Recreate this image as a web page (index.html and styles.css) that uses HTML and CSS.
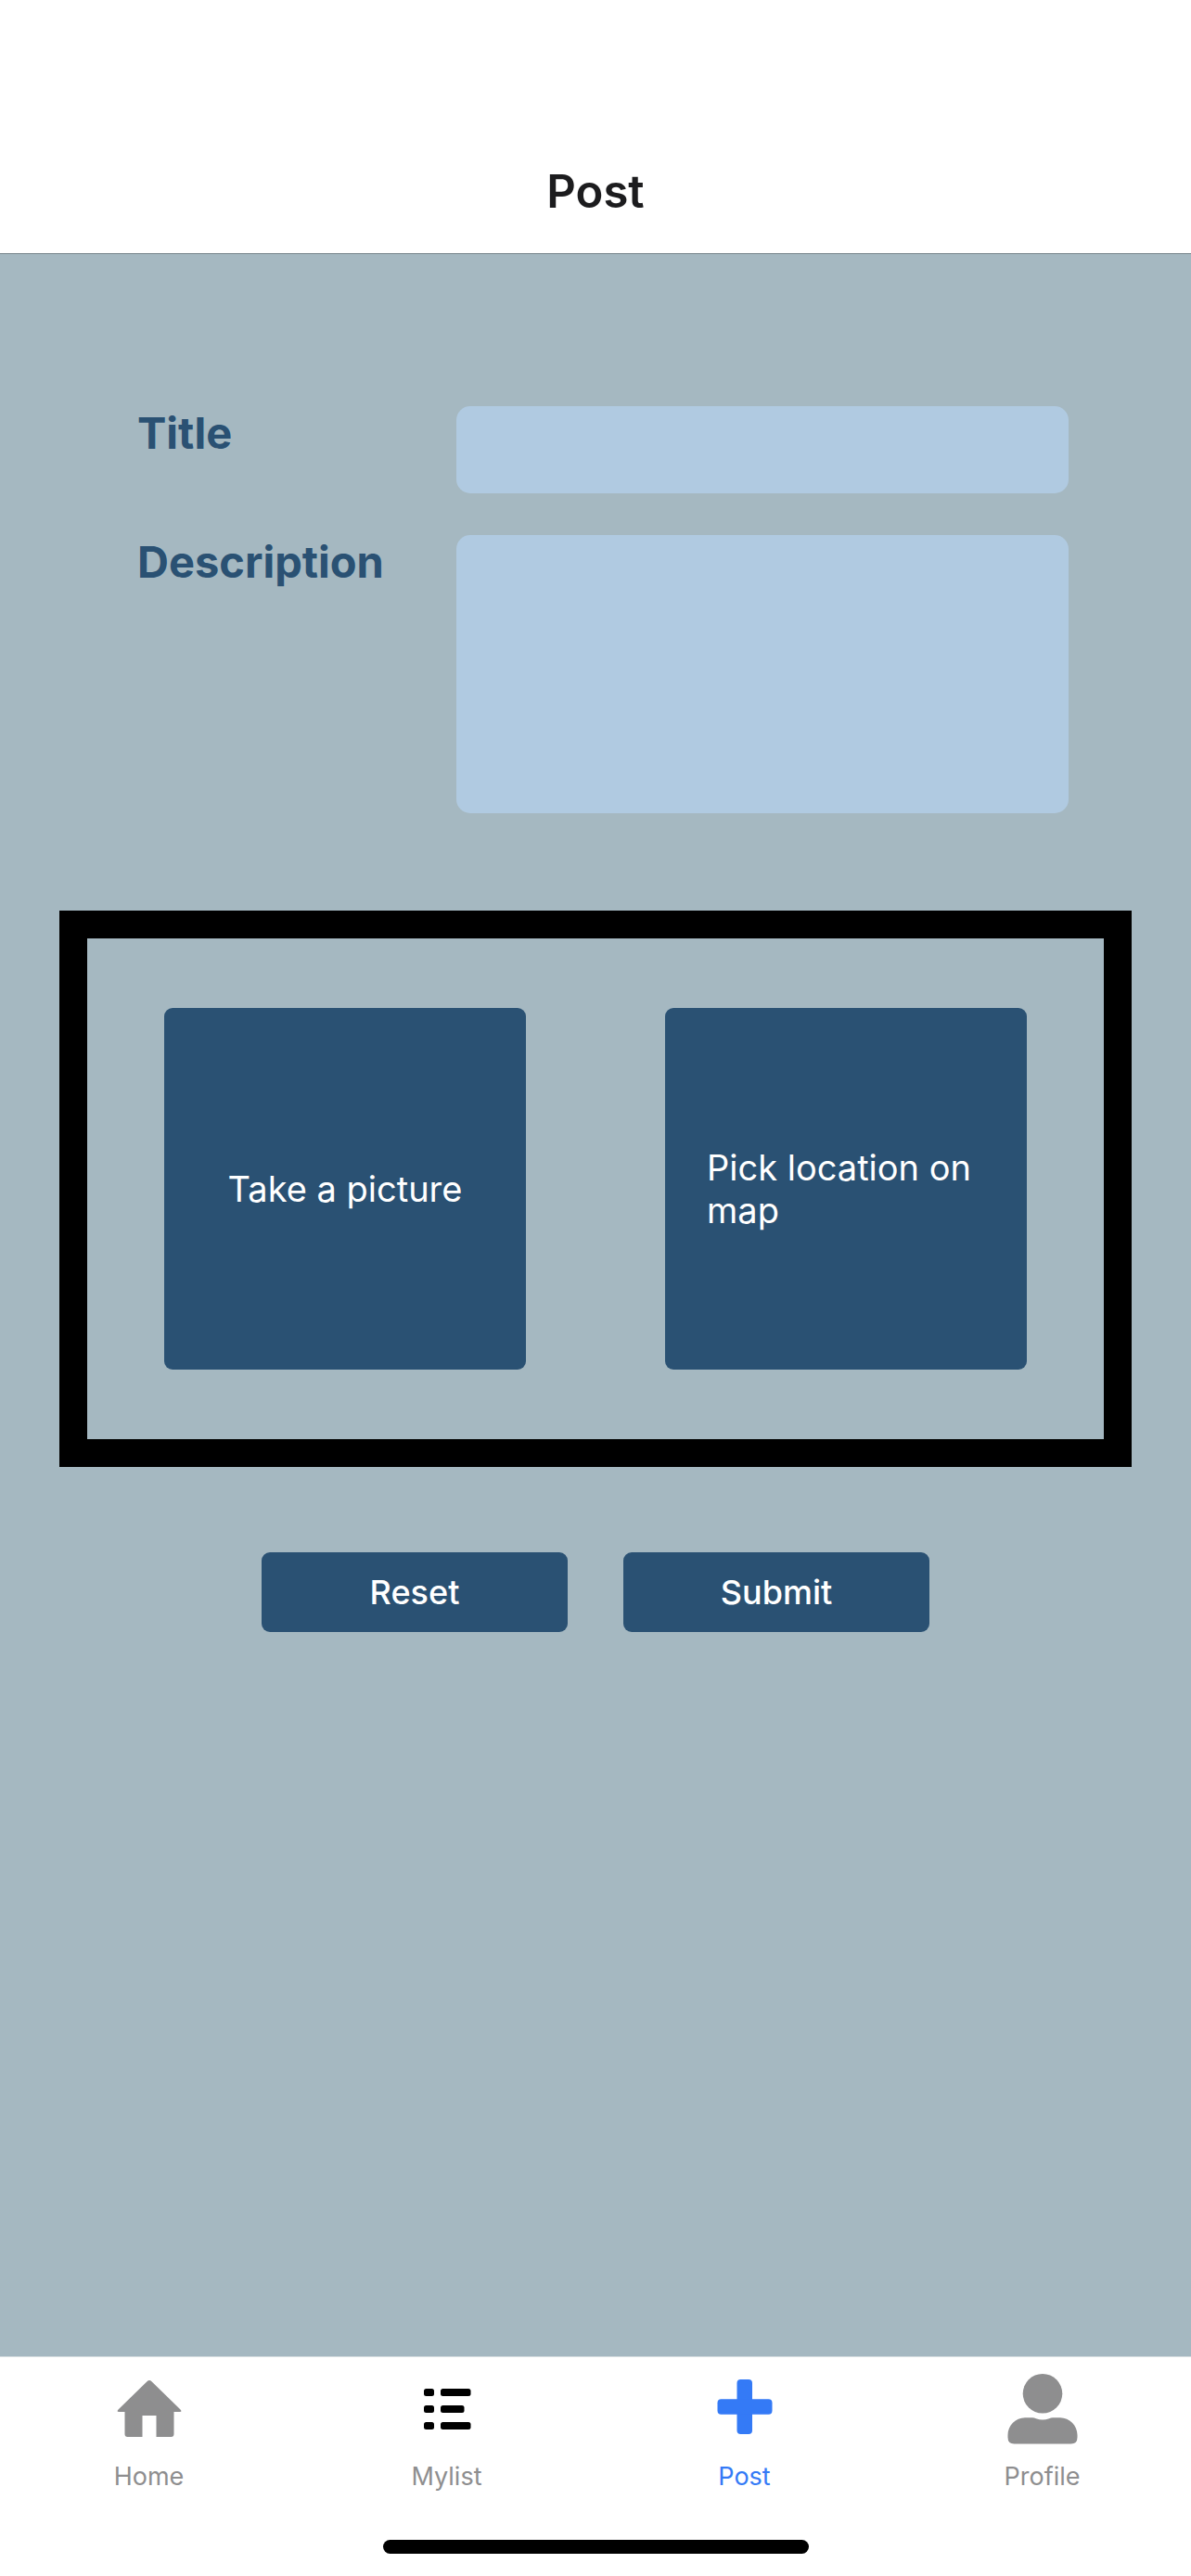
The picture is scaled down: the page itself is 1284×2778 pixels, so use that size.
FILE: index.html
```html
<!DOCTYPE html>
<html lang="en">
<head>
<meta charset="utf-8">
<meta name="viewport" content="width=device-width, initial-scale=1">
<title>Post</title>
<link rel="stylesheet" href="styles.css">
</head>
<body>
<div class="app">
  <header class="header">
    <h1 class="header-title">Post</h1>
  </header>

  <main class="main">
    <form class="form">
      <div class="fields">
        <label class="field-label" for="title">Title</label>
        <input class="field" id="title" type="text">
        <label class="field-label" for="description">Description</label>
        <textarea class="field field-tall" id="description"></textarea>
      </div>

      <div class="media">
        <button class="tile" type="button">Take a picture</button>
        <button class="tile" type="button">Pick location on map</button>
      </div>

      <div class="actions">
        <button class="action" type="reset">Reset</button>
        <button class="action" type="submit">Submit</button>
      </div>
    </form>
  </main>

  <footer class="footer">
    <nav class="tabs">
      <a class="tab" href="#home">
        <svg class="tab-icon" viewBox="0 0 90 90" aria-hidden="true">
          <path d="M42.500 16.200Q45 14 47.500 16.200L78.500 46.500Q80.500 49 78 49H71.500V73Q71.500 76 68.500 76H52.500V53H37.500V76H21.500Q18.500 76 18.500 73V49H12Q9.500 49 11.500 46.500Z"/>
        </svg>
        <span>Home</span>
      </a>
      <a class="tab" href="#mylist">
        <svg class="tab-icon tab-icon-dark" viewBox="0 0 90 90" aria-hidden="true">
          <rect x="20" y="24" width="11" height="8" rx="2.500"/>
          <rect x="38" y="24" width="32.500" height="8" rx="2.500"/>
          <rect x="20" y="42" width="11" height="8" rx="2.500"/>
          <rect x="38" y="42" width="25.500" height="8" rx="2.500"/>
          <rect x="20" y="60" width="11" height="8" rx="2.500"/>
          <rect x="38" y="60" width="32.500" height="8" rx="2.500"/>
        </svg>
        <span>Mylist</span>
      </a>
      <a class="tab tab-active" href="#post" aria-current="page">
        <svg class="tab-icon" viewBox="0 0 90 90" aria-hidden="true">
          <rect x="36.500" y="14" width="16.500" height="59" rx="4"/>
          <rect x="15.500" y="35.300" width="59" height="16.500" rx="4"/>
        </svg>
        <span>Post</span>
      </a>
      <a class="tab" href="#profile">
        <svg class="tab-icon" viewBox="0 0 90 90" aria-hidden="true">
          <circle cx="45" cy="29.300" r="21.300"/>
          <path d="M26 55.200H34Q36 55.200 38 56.200Q45 58.600 52 56.200Q54 55.200 56 55.200H64C74 55.200 82.500 63.500 82.500 74V76.500Q82.500 83.500 75.500 83.500H14.500Q7.500 83.500 7.500 76.500V74C7.500 63.500 16 55.200 26 55.200Z"/>
        </svg>
        <span>Profile</span>
      </a>
    </nav>
    <div class="home-indicator"></div>
  </footer>
</div>
</body>
</html>
```
FILE: styles.css
```css
* {
  box-sizing: border-box;
}

body {
  margin: 0;
  background: #a5b8c1;
  font-family: Inter, "Liberation Sans", sans-serif;
}

button,
input,
textarea {
  font: inherit;
  border: 0;
}

.app {
  display: flex;
  flex-direction: column;
  min-height: 100vh;
}

.header {
  padding: 177px 24px 36px;
  background: #fff;
  border-bottom: 1px solid #75848b;
}

.header-title {
  margin: 0;
  color: #1c1c1e;
  font-size: 49px;
  font-weight: 600;
  line-height: 60px;
  text-align: center;
}

.main {
  flex: 1;
  padding: 164px 0 60px;
}

.fields {
  display: grid;
  grid-template-columns: 344px 1fr;
  row-gap: 45px;
  padding: 0 132px 0 148px;
}

.field-label {
  color: #2a5173;
  font-size: 47px;
  font-weight: 700;
  line-height: 58px;
}

.field {
  display: block;
  width: 100%;
  height: 94px;
  padding: 16px 24px;
  border-radius: 15px;
  background: #b0cae1;
  color: #2a5173;
  font-size: 38px;
  outline: none;
  resize: none;
}

.field-tall {
  height: 300px;
}

.media {
  display: flex;
  justify-content: center;
  gap: 150px;
  width: 90%;
  margin: 105px auto 92px;
  padding: 75px 0;
  border: 30px solid #000;
}

.tile {
  display: flex;
  align-items: center;
  justify-content: center;
  width: 390px;
  height: 390px;
  padding: 0 45px;
  border-radius: 9px;
  background: #2a5173;
  color: #fff;
  font-size: 38px;
  line-height: 46px;
  text-align: left;
}

.actions {
  display: flex;
  justify-content: center;
  gap: 60px;
}

.action {
  width: 330px;
  height: 86px;
  padding: 0;
  border-radius: 9px;
  background: #2a5173;
  color: #fff;
  font-size: 36px;
  font-weight: 500;
}

.footer {
  display: flex;
  flex-direction: column;
  align-items: center;
  gap: 50px;
  padding: 10px 0 24px;
  border-top: 1px solid #d5dce0;
  background: #fff;
}

.tabs {
  display: grid;
  grid-template-columns: repeat(4, 1fr);
  width: 100%;
}

.tab {
  display: flex;
  flex-direction: column;
  align-items: center;
  gap: 11px;
  color: #8e8e8f;
  font-size: 27px;
  line-height: 36px;
  text-decoration: none;
}

.tab-active {
  color: #347af6;
}

.tab-icon {
  width: 90px;
  height: 90px;
  fill: currentColor;
}

.tab-icon-dark {
  fill: #000;
}

.home-indicator {
  width: 459px;
  height: 15px;
  border-radius: 8px;
  background: #000;
}
```
